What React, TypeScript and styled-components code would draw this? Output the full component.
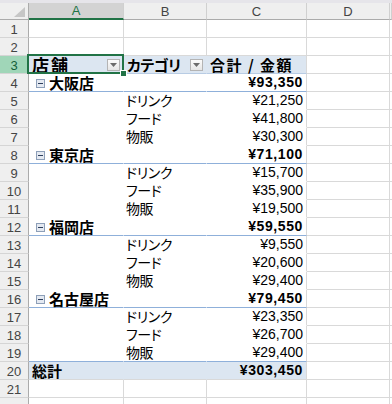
import styled, { createGlobalStyle, css } from 'styled-components';

const GREEN = '#217346';
const GRID = '#d9d9d9';
const PIVOT_FILL = '#dce6f1';
const PIVOT_LINE = '#8fb0da';
const COLS = '29px 95px 83px 100px 83px 1fr';

type Line = 'grid' | 'none' | 'blue' | 'soft';

const stores = [
  {
    name: '大阪店',
    total: '¥93,350',
    items: [
      ['ドリンク', '¥21,250'],
      ['フード', '¥41,800'],
      ['物販', '¥30,300'],
    ],
  },
  {
    name: '東京店',
    total: '¥71,100',
    items: [
      ['ドリンク', '¥15,700'],
      ['フード', '¥35,900'],
      ['物販', '¥19,500'],
    ],
  },
  {
    name: '福岡店',
    total: '¥59,550',
    items: [
      ['ドリンク', '¥9,550'],
      ['フード', '¥20,600'],
      ['物販', '¥29,400'],
    ],
  },
  {
    name: '名古屋店',
    total: '¥79,450',
    items: [
      ['ドリンク', '¥23,350'],
      ['フード', '¥26,700'],
      ['物販', '¥29,400'],
    ],
  },
];

export default function App() {
  let rowNo = 3;

  return (
    <>
      <GlobalStyle />
      <Sheet>
        <TopStrip />
        <Row $h={17}>
          <Corner>
            <CornerMark />
          </Corner>
          <ColHeader $selected>A</ColHeader>
          <ColHeader>B</ColHeader>
          <ColHeader>C</ColHeader>
          <ColHeader>D</ColHeader>
          <ColHeader />
        </Row>

        <EmptyRow n={1} />
        <EmptyRow n={2} />

        <Row>
          <RowHeader $selected>3</RowHeader>
          <SelectedCell $fill $noRight $bottom='soft'>
            <HeadLabel $size={17} $spacing={2}>店舗</HeadLabel>
            <DropButton />
          </SelectedCell>
          <Cell $fill $noRight $bottom='soft'>
            <HeadLabel $spacing={-0.5}>カテゴリ</HeadLabel>
            <DropButton />
          </Cell>
          <Cell $fill $bottom='soft'>
            <HeadLabel $spacing={1.5}>合計 / 金額</HeadLabel>
          </Cell>
          <Cell />
          <Cell />
        </Row>

        {stores.map((store) => {
          rowNo += 1;
          const groupRow = rowNo;
          return (
            <div key={store.name}>
              <Row>
                <RowHeader>{groupRow}</RowHeader>
                <Cell $noRight $bottom='blue'>
                  <Collapse />
                  <GroupLabel>{store.name}</GroupLabel>
                </Cell>
                <Cell $noRight $bottom='blue' />
                <Cell $bottom='blue' $right>
                  <Amount $bold>{store.total}</Amount>
                </Cell>
                <Cell />
                <Cell />
              </Row>
              {store.items.map(([cat, value], i) => {
                rowNo += 1;
                const last = i === store.items.length - 1;
                const closesTable = last && store.name === '名古屋店';
                return (
                  <Row key={cat}>
                    <RowHeader>{rowNo}</RowHeader>
                    <Cell $noRight $bottom={closesTable ? 'blue' : 'none'} />
                    <Cell $noRight $bottom={closesTable ? 'blue' : 'none'}>
                      <ItemLabel>{cat}</ItemLabel>
                    </Cell>
                    <Cell $bottom={closesTable ? 'blue' : 'none'} $right>
                      <Amount>{value}</Amount>
                    </Cell>
                    <Cell />
                    <Cell />
                  </Row>
                );
              })}
            </div>
          );
        })}

        <Row>
          <RowHeader>20</RowHeader>
          <Cell $fill $noRight>
            <HeadLabel>総計</HeadLabel>
          </Cell>
          <Cell $fill $noRight />
          <Cell $fill $right>
            <Amount $bold>¥303,450</Amount>
          </Cell>
          <Cell />
          <Cell />
        </Row>

        <EmptyRow n={21} />
        {/* row 22 only peeks in below the window edge, its number is out of view */}
        <EmptyRow />
      </Sheet>
    </>
  );
}

function EmptyRow({ n }: { n?: number }) {
  return (
    <Row>
      <RowHeader>{n}</RowHeader>
      <Cell />
      <Cell />
      <Cell />
      <Cell />
      <Cell />
    </Row>
  );
}

function DropButton() {
  return (
    <DropBox>
      <svg width='7' height='4' viewBox='0 0 7 4'>
        <path d='M0 0h7L3.5 4z' fill='#6b6b6b' />
      </svg>
    </DropBox>
  );
}

function Collapse() {
  return (
    <CollapseBox>
      <svg width='9' height='9' viewBox='0 0 9 9'>
        <rect x='0.5' y='0.5' width='8' height='8' fill='#e4e9f1' stroke='#8d9fb8' />
        <path d='M2 4.5h5' stroke='#2c3e5c' strokeWidth='1' />
      </svg>
    </CollapseBox>
  );
}

const GlobalStyle = createGlobalStyle`
  html, body {
    margin: 0;
    padding: 0;
    background: #ffffff;
    overflow: hidden;
  }
  body {
    font-family: "Liberation Sans", "Noto Sans CJK JP", sans-serif;
  }
`;

const Sheet = styled.div`
  width: 392px;
  height: 404px;
  overflow: hidden;
  background: #ffffff;
`;

const TopStrip = styled.div`
  height: 3px;
  background: #e6e5ea;
`;

const Row = styled.div<{ $h?: number }>`
  display: grid;
  grid-template-columns: ${COLS};
  height: ${(p) => p.$h ?? 18}px;
`;

const Corner = styled.div`
  display: flex;
  align-items: flex-end;
  justify-content: flex-end;
  padding: 0 3px 2px 0;
  background: #efefef;
  border-right: 1px solid #ababab;
  border-bottom: 1px solid #ababab;
`;

const CornerMark = styled.div`
  width: 11px;
  height: 10px;
  background: #c6c6c6;
  clip-path: polygon(100% 0, 100% 100%, 0 100%);
`;

const ColHeader = styled.div<{ $selected?: boolean }>`
  display: flex;
  align-items: center;
  justify-content: center;
  font-family: "Liberation Sans", sans-serif;
  font-size: 13px;
  background: ${(p) => (p.$selected ? '#d3d3d3' : '#efefef')};
  color: ${(p) => (p.$selected ? GREEN : '#444444')};
  border-right: 1px solid #d0d0d0;
  border-bottom: ${(p) =>
    p.$selected ? `2px solid ${GREEN}` : '1px solid #ababab'};
`;

const RowHeader = styled.div<{ $selected?: boolean }>`
  display: flex;
  align-items: center;
  justify-content: center;
  font-family: "Liberation Sans", sans-serif;
  font-size: 13px;
  padding-top: 1px;
  background: ${(p) => (p.$selected ? '#a0d6b8' : '#efefef')};
  color: ${(p) => (p.$selected ? '#14613a' : '#444444')};
  border-right: 1px solid #ababab;
  border-bottom: 1px solid #d5d5d5;
`;

const lineColor = (l: Line) =>
  l === 'blue'
    ? PIVOT_LINE
    : l === 'soft'
      ? '#b8cce4'
      : l === 'none'
        ? '#ffffff'
        : GRID;

const Cell = styled.div<{
  $fill?: boolean;
  $noRight?: boolean;
  $bottom?: Line;
  $right?: boolean;
}>`
  display: flex;
  align-items: center;
  justify-content: ${(p) => (p.$right ? 'flex-end' : 'flex-start')};
  min-width: 0;
  padding: 0 3px;
  white-space: nowrap;
  background: ${(p) => (p.$fill ? PIVOT_FILL : '#ffffff')};
  border-right: 1px solid
    ${(p) => (p.$noRight ? (p.$fill ? PIVOT_FILL : '#ffffff') : GRID)};
  border-bottom: 1px solid ${(p) => lineColor(p.$bottom ?? 'grid')};
`;

const SelectedCell = styled(Cell)`
  position: relative;
  z-index: 2;

  &::after {
    content: '';
    position: absolute;
    top: -2px;
    left: -2px;
    right: -1px;
    bottom: -1px;
    border: 2px solid ${GREEN};
    pointer-events: none;
  }

  &::before {
    content: '';
    position: absolute;
    right: -4px;
    bottom: -4px;
    width: 5px;
    height: 5px;
    background: ${GREEN};
    border: 1px solid #ffffff;
    z-index: 3;
  }
`;

const japanese = css`
  font-family: "Noto Sans CJK JP", sans-serif;
  font-feature-settings: "palt";
  color: #000000;
  line-height: 15px;
`;

const HeadLabel = styled.span<{ $spacing?: number; $size?: number }>`
  ${japanese};
  font-size: ${(p) => p.$size ?? 15}px;
  font-weight: 700;
  letter-spacing: ${(p) => p.$spacing ?? 0}px;
  flex: 1;
`;

const GroupLabel = styled.span`
  ${japanese};
  font-size: 15px;
  font-weight: 700;
`;

const ItemLabel = styled.span`
  ${japanese};
  font-size: 14px;
  letter-spacing: -0.4px;
  margin-left: -1px;
`;

const Amount = styled.span<{ $bold?: boolean }>`
  font-family: "Liberation Sans", sans-serif;
  font-size: 14px;
  line-height: 15px;
  font-weight: ${(p) => (p.$bold ? 700 : 400)};
  letter-spacing: ${(p) => (p.$bold ? '0.6px' : '0')};
  color: #000000;
`;

const DropBox = styled.div`
  display: flex;
  align-items: center;
  justify-content: center;
  width: 13px;
  height: 12px;
  box-sizing: border-box;
  border: 1px solid #b4b4b4;
  background: linear-gradient(#fbfbfb, #e6e6e6);
  flex-shrink: 0;
`;

const CollapseBox = styled.div`
  display: flex;
  margin: 1px 4px 0 4px;
`;
